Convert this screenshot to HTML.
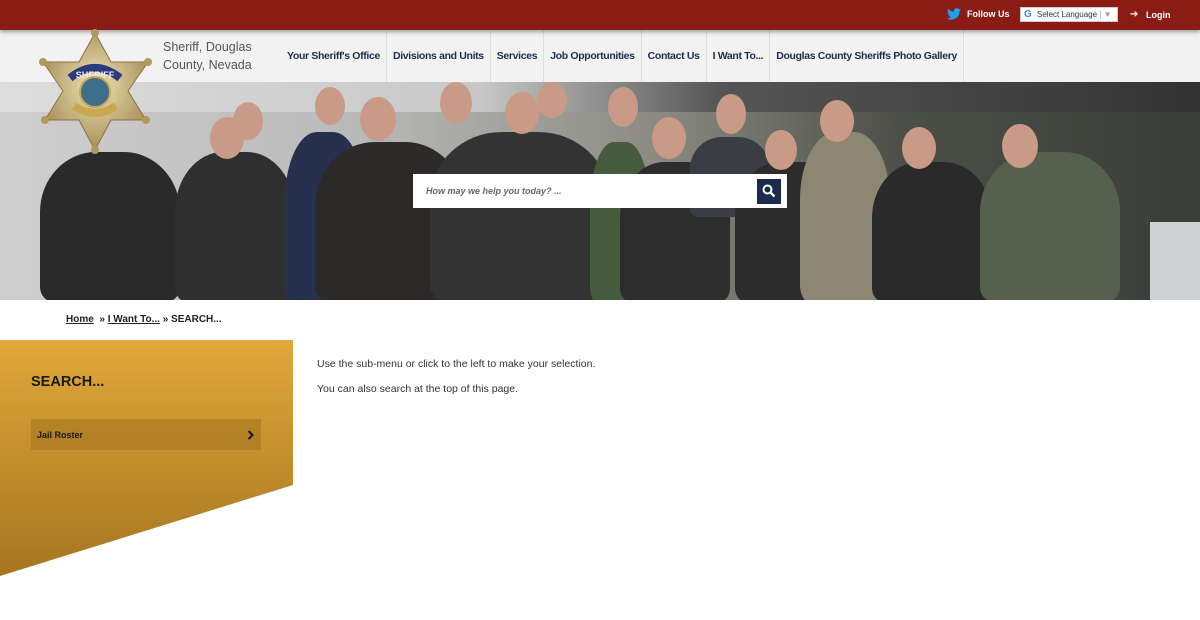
<!DOCTYPE html>
<html><head><meta charset="utf-8"><style>
*{margin:0;padding:0;box-sizing:border-box}
body{width:1200px;height:620px;overflow:hidden;background:#fff;font-family:"Liberation Sans",sans-serif;position:relative}
.top{position:absolute;left:0;top:0;width:1200px;height:30px;background:#8b1c15;box-shadow:0 2px 4px rgba(0,0,0,.35);z-index:3}
.hdr{position:absolute;left:0;top:30px;width:1200px;height:52px;background:#f2f2f2}
.nav{position:absolute;top:30px;left:281px;height:52px;display:flex}
.nav div{height:52px;line-height:52px;padding:0 6px;font-size:10.5px;font-weight:bold;color:#1f2d4a;border-right:1px solid #ddd;letter-spacing:-.35px}
.hero{position:absolute;left:0;top:82px;width:1200px;height:218px;overflow:hidden;background:linear-gradient(90deg,#cfcfcf 0%,#b9b9b9 30%,#8a8a82 55%,#4c4f48 75%,#3b3d38 100%)}
.p{position:absolute;border-radius:40% 40% 10% 10%}
.h{position:absolute;border-radius:50%;background:#c99a86}
</style></head><body>
<div class="top">
<svg style="position:absolute;left:947px;top:8px" width="14" height="12" viewBox="0 0 24 20"><path fill="#1da1f2" d="M24 2.4c-.9.4-1.8.6-2.8.8 1-.6 1.8-1.600 2.2-2.7-1 .6-2 1-3.1 1.2C19.3.7 18 0 16.6 0c-2.7 0-4.9 2.2-4.9 4.9 0 .4 0 .8.1 1.1C7.7 5.8 4.1 3.9 1.7.9c-.4.7-.7 1.6-.7 2.5 0 1.7.9 3.2 2.2 4.1-.8 0-1.6-.2-2.2-.6v.1c0 2.4 1.7 4.4 3.9 4.8-.4.1-.8.2-1.3.2-.3 0-.6 0-.9-.1.6 2 2.4 3.4 4.6 3.4-1.7 1.3-3.8 2.1-6.1 2.1H0c2.2 1.4 4.8 2.200 7.5 2.2 9.1 0 14-7.5 14-14v-.6c1-.7 1.8-1.600 2.5-2.6z"/></svg>
<span style="position:absolute;left:967px;top:9px;font-size:9px;font-weight:bold;color:#fff">Follow Us</span>
<div style="position:absolute;left:1020px;top:7px;width:98px;height:15px;background:#fff;border:1px solid #ccc;font-size:8px;line-height:13px;color:#333;padding-left:16px">Select Language <span style="color:#999">| ▼</span><span style="position:absolute;left:3px;top:0;font-weight:bold;color:#4285f4;font-size:10px">G</span></div>
<span style="position:absolute;left:1130px;top:9px;font-size:10px;color:#fff">➔</span>
<span style="position:absolute;left:1146px;top:10px;font-size:9px;font-weight:bold;color:#fff">Login</span>
</div>
<div class="hdr"></div>
<div style="position:absolute;left:163px;top:38px;font-size:12.5px;line-height:18px;color:#555">Sheriff, Douglas<br>County, Nevada</div>
<div class="nav"><div>Your Sheriff's Office</div><div>Divisions and Units</div><div>Services</div><div>Job Opportunities</div><div>Contact Us</div><div>I Want To...</div><div>Douglas County Sheriffs Photo Gallery</div></div>
<div class="hero">
<div style="position:absolute;left:0;top:0;width:1200px;height:30px;background:linear-gradient(90deg,#ddd,#c8c8c8 40%,#555 60%,#333)"></div>
<div class="p" style="left:40px;top:70px;width:140px;height:150px;background:#2a2a2a"></div>
<div class="p" style="left:175px;top:70px;width:120px;height:150px;background:#2f2f2f"></div>
<div class="p" style="left:285px;top:50px;width:80px;height:170px;background:#27304d"></div>
<div class="p" style="left:315px;top:60px;width:150px;height:160px;background:#2b2a28"></div>
<div class="p" style="left:430px;top:50px;width:180px;height:170px;background:#333"></div>
<div class="p" style="left:590px;top:60px;width:60px;height:160px;background:#465a3e"></div>
<div class="p" style="left:620px;top:80px;width:110px;height:140px;background:#2d2d2d"></div>
<div class="p" style="left:690px;top:55px;width:80px;height:80px;background:#3a3e44"></div>
<div class="p" style="left:735px;top:80px;width:110px;height:140px;background:#2c2c2c"></div>
<div class="p" style="left:800px;top:50px;width:90px;height:170px;background:#8d8672"></div>
<div class="p" style="left:872px;top:80px;width:120px;height:140px;background:#2a2a2a"></div>
<div class="p" style="left:980px;top:70px;width:140px;height:150px;background:#55604f"></div>
<div style="position:absolute;left:1150px;top:140px;width:50px;height:80px;background:#cfd2d2"></div>
<div class="h" style="left:210px;top:35px;width:34px;height:42px"></div>
<div class="h" style="left:233px;top:20px;width:30px;height:38px"></div>
<div class="h" style="left:315px;top:5px;width:30px;height:38px"></div>
<div class="h" style="left:360px;top:15px;width:36px;height:44px"></div>
<div class="h" style="left:440px;top:0;width:32px;height:42px"></div>
<div class="h" style="left:505px;top:10px;width:34px;height:42px"></div>
<div class="h" style="left:537px;top:0;width:30px;height:36px"></div>
<div class="h" style="left:608px;top:5px;width:30px;height:40px"></div>
<div class="h" style="left:652px;top:35px;width:34px;height:42px"></div>
<div class="h" style="left:716px;top:12px;width:30px;height:40px"></div>
<div class="h" style="left:765px;top:48px;width:32px;height:40px"></div>
<div class="h" style="left:820px;top:18px;width:34px;height:42px"></div>
<div class="h" style="left:902px;top:45px;width:34px;height:42px"></div>
<div class="h" style="left:1002px;top:42px;width:36px;height:44px"></div>
<div style="position:absolute;left:413px;top:92px;width:374px;height:34px;background:#fff"></div>
<span style="position:absolute;left:426px;top:104px;font-size:9px;font-style:italic;font-weight:bold;color:#666">How may we help you today? ...</span>
<div style="position:absolute;left:757px;top:97px;width:24px;height:25px;background:#1b2b4d"></div>
<svg style="position:absolute;left:762px;top:102px" width="14" height="14" viewBox="0 0 14 14"><circle cx="5.5" cy="5.5" r="4" fill="none" stroke="#fff" stroke-width="2"/><path d="M8.5 8.5L12.5 12.5" stroke="#fff" stroke-width="2.4"/></svg>
</div>
<svg style="position:absolute;left:38px;top:28px;z-index:4" width="116" height="128" viewBox="0 0 116 128">
<defs><radialGradient id="g" cx="50%" cy="45%" r="55%"><stop offset="0" stop-color="#efe3b8"/><stop offset="1" stop-color="#a89058"/></radialGradient></defs>
<polygon points="57,5 73,34 110,34 90,63 108,92 73,92 57,122 41,92 7,92 25,63 5,34 41,34" fill="url(#g)" stroke="#8a7340"/>
<circle cx="57" cy="5" r="4" fill="#b09a5c"/><circle cx="57" cy="122" r="4" fill="#b09a5c"/><circle cx="5" cy="34" r="4" fill="#b09a5c"/><circle cx="110" cy="34" r="4" fill="#b09a5c"/><circle cx="7" cy="92" r="4" fill="#b09a5c"/><circle cx="108" cy="92" r="4" fill="#b09a5c"/>
<path d="M32 50 Q57 30 82 50" stroke="#2a3a7a" stroke-width="8" fill="none"/>
<text x="57" y="50" font-size="9" font-weight="bold" fill="#eee" text-anchor="middle" font-family="Liberation Sans">SHERIFF</text>
<circle cx="57" cy="64" r="15" fill="#3d6f8a" stroke="#c8a850" stroke-width="2"/>
<path d="M36 78 Q57 92 78 78" stroke="#c8a850" stroke-width="8" fill="none"/>
</svg>
<div style="position:absolute;left:66px;top:314px;font-size:10px;font-weight:bold;color:#222"><u>Home</u> &nbsp;» <u>I Want To...</u> » SEARCH...</div>
<svg style="position:absolute;left:0;top:340px" width="293" height="237"><defs><linearGradient id="s" x1="0" y1="0" x2="0" y2="1"><stop offset="0" stop-color="#e1a83a"/><stop offset="1" stop-color="#a57520"/></linearGradient></defs><polygon points="0,0 293,0 293,145 0,236" fill="url(#s)"/></svg>
<div style="position:absolute;left:31px;top:374px;font-size:14.5px;font-weight:bold;color:#1a1a1a">SEARCH...</div>
<div style="position:absolute;left:31px;top:419px;width:230px;height:31px;background:rgba(140,95,20,.35)"></div>
<span style="position:absolute;left:37px;top:430px;font-size:9px;font-weight:bold;color:#1a1a1a">Jail Roster</span>
<svg style="position:absolute;left:247px;top:430px" width="7" height="10" viewBox="0 0 7 10"><path d="M1.5 1L5.5 5L1.5 9" stroke="#1a1a1a" stroke-width="2" fill="none"/></svg>
<div style="position:absolute;left:317px;top:352px;font-size:10.5px;color:#333;line-height:25px">Use the sub-menu or click to the left to make your selection.<br>You can also search at the top of this page.</div>
</body></html>
